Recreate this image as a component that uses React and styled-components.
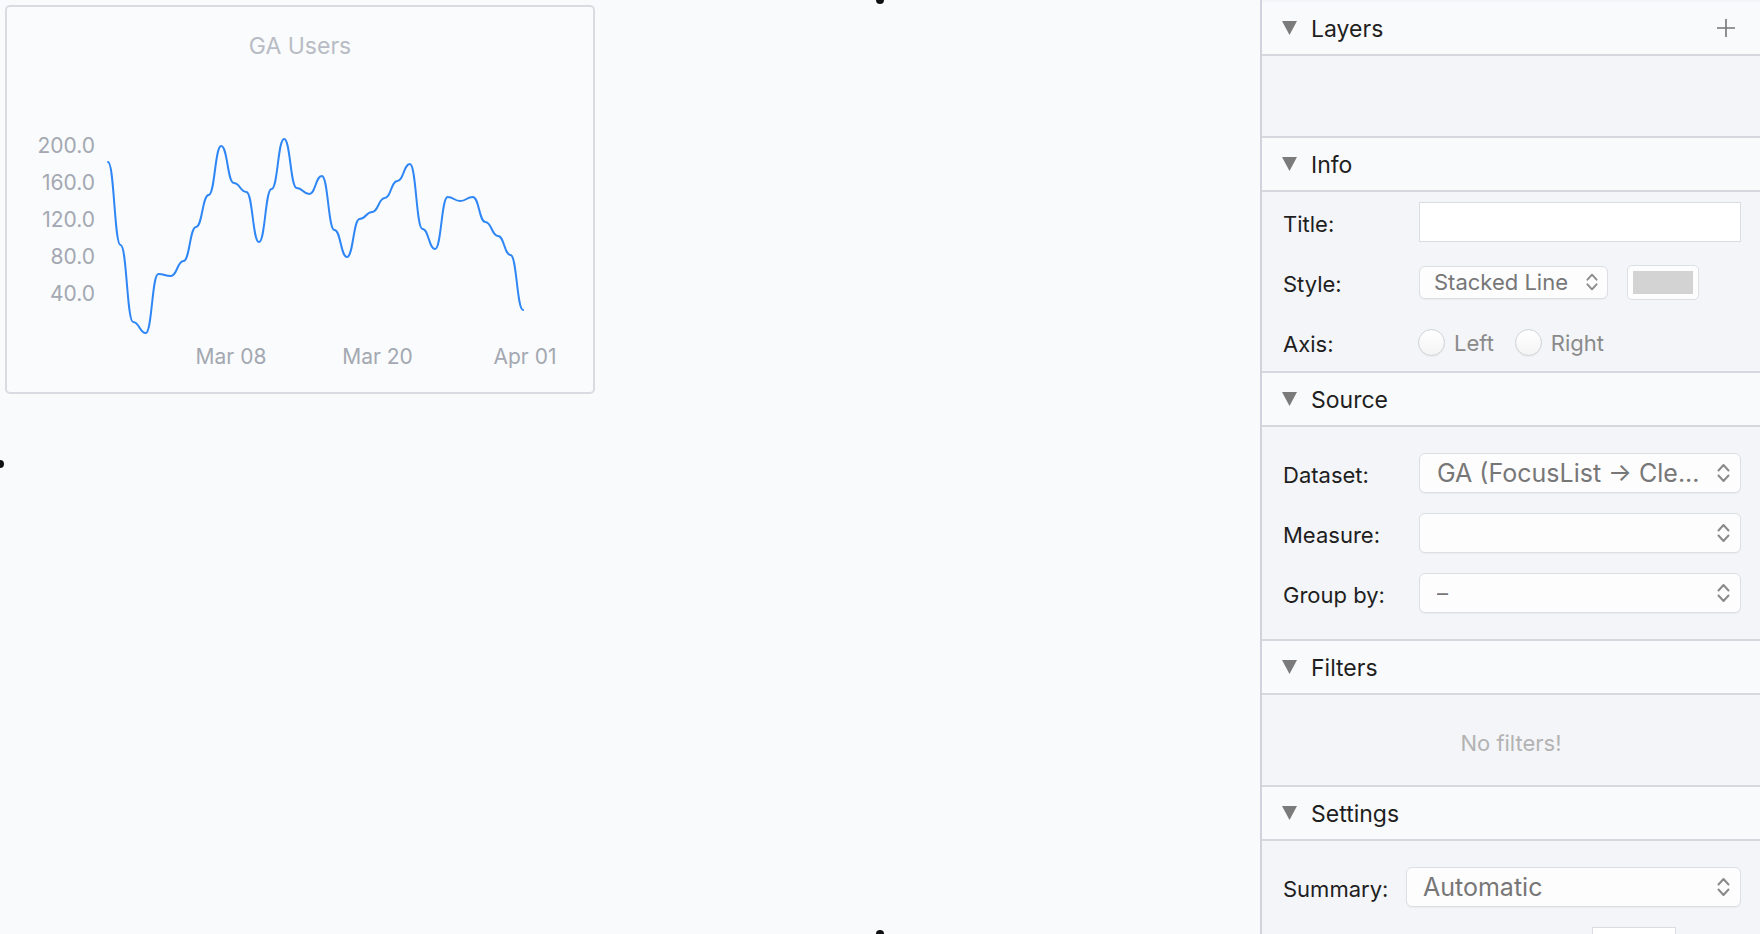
import React from "react";
import styled, { createGlobalStyle } from "styled-components";

const GlobalStyle = createGlobalStyle`
  html, body { margin: 0; padding: 0; }
  body {
    font-family: Inter, "Noto Sans", sans-serif;
    background: #f9fafc;
    -webkit-font-smoothing: antialiased;
  }
`;

const Shell = styled.div`
  display: flex;
  height: 934px;
  overflow: hidden;
  background: #f9fafc;
`;

const Canvas = styled.main`
  flex: 1;
  position: relative;
  padding: 5px;
`;

const Handle = styled.span`
  position: absolute;
  width: 8px;
  height: 8px;
  border-radius: 50%;
  background: #111;
  left: ${(p) => p.$x}px;
  top: ${(p) => p.$y}px;
`;

const ChartCard = styled.section`
  width: 590px;
  height: 389px;
  box-sizing: border-box;
  border: 2px solid #d8dbe2;
  border-radius: 5px;
  background: #fafbfc;
  display: flex;
  flex-direction: column;
  overflow: hidden;
`;

const ChartTitle = styled.h2`
  margin: 0;
  padding-top: 25px;
  height: 28px;
  line-height: 28px;
  font-size: 23px;
  font-weight: 400;
  color: #b8bcc4;
  text-align: center;
`;

const ChartSvg = styled.svg`
  display: block;
  overflow: visible;
`;

const AxisText = styled.text`
  font-family: Inter, "Noto Sans", sans-serif;
  font-size: 21px;
  fill: #a3a8b2;
`;

const Panel = styled.aside`
  width: 498px;
  flex: none;
  border-left: 2px solid #cfd3db;
  background: #f3f5f8;
  padding-top: 2px;
  display: flex;
  flex-direction: column;
`;

const SectionHeader = styled.header`
  height: 54px;
  box-sizing: border-box;
  flex: none;
  border-bottom: 2px solid #d5d8df;
  background: #f9fafb;
  display: flex;
  align-items: center;
  gap: 14px;
  padding: 0 25px 0 20px;
`;

const SectionTitle = styled.h3`
  margin: 0;
  flex: 1;
  font-size: 23px;
  font-weight: 400;
  color: #1f1f1f;
  padding-top: 2px;
`;

const SectionBody = styled.div`
  flex: none;
  box-sizing: border-box;
  height: ${(p) => p.$h + (p.$last ? 0 : 2)}px;
  padding: ${(p) => p.$pad || "0"};
  border-bottom: ${(p) => (p.$last ? "none" : "2px solid #d5d8df")};
  display: flex;
  flex-direction: column;
  gap: 20px;
  justify-content: ${(p) => (p.$center ? "center" : "flex-start")};
  align-items: ${(p) => (p.$center ? "center" : "stretch")};
`;

const Row = styled.div`
  display: grid;
  grid-template-columns: ${(p) => p.$labelW}px 1fr;
  align-items: center;
  height: 40px;
  flex: none;
`;

const Label = styled.label`
  font-size: 22px;
  color: #1e1e1e;
  padding-top: 3px;
`;

const TextInput = styled.div`
  height: 40px;
  box-sizing: border-box;
  border: 1px solid #d9dce2;
  background: #ffffff;
`;

const Controls = styled.div`
  display: flex;
  align-items: center;
`;

const Select = styled.div`
  display: flex;
  align-items: center;
  box-sizing: border-box;
  width: ${(p) => (p.$w ? `${p.$w}px` : "100%")};
  height: ${(p) => p.$h || 40}px;
  padding: 0 ${(p) => p.$pr || 9}px 0 ${(p) => p.$pl || 17}px;
  border: 1px solid #dcdfe4;
  border-radius: 6px;
  background: #fdfdfe;
  box-shadow: 0 1px 1px rgba(0, 0, 0, 0.04);
  font-size: ${(p) => p.$fs || 25}px;
  color: #777777;
`;

const SelectText = styled.span`
  flex: 1;
  white-space: nowrap;
  overflow: hidden;
`;

const Swatch = styled.div`
  width: 72px;
  height: 35px;
  box-sizing: border-box;
  padding: 5px;
  border: 1px solid #dcdfe4;
  border-radius: 5px;
  background: #fdfdfe;
  margin-left: 19px;
`;

const SwatchFill = styled.div`
  width: 100%;
  height: 100%;
  background: #d3d3d3;
`;

const Radio = styled.span`
  width: 27px;
  height: 27px;
  box-sizing: border-box;
  border-radius: 50%;
  border: 1px solid #cfd2d7;
  background: linear-gradient(#ffffff, #f4f4f5);
  box-shadow: 0 1px 1px rgba(0, 0, 0, 0.05);
  margin-left: ${(p) => p.$ml || 0}px;
  flex: none;
`;

const RadioText = styled.span`
  font-size: 22px;
  color: #8a8a8a;
  margin-left: 9px;
  padding-top: 2px;
`;

const EmptyNote = styled.span`
  font-size: 22px;
  color: #b3b3b3;
  padding-top: 6px;
`;

const SmallBox = styled.div`
  width: 84px;
  height: 40px;
  box-sizing: border-box;
  border: 1px solid #d9dce2;
  background: #ffffff;
  margin-left: 186px;
`;

const Chevrons = ({ w = 15, h = 24 }) => (
  <svg width={w} height={h} viewBox="0 0 15 24" fill="none">
    <path d="M2.5 9.5 L7.5 4 L12.5 9.5" stroke="#8a8a8a" strokeWidth="2" strokeLinecap="round" strokeLinejoin="round" />
    <path d="M2.5 14.5 L7.5 20 L12.5 14.5" stroke="#8a8a8a" strokeWidth="2" strokeLinecap="round" strokeLinejoin="round" />
  </svg>
);

const Disclosure = () => (
  <svg width="15" height="14" viewBox="0 0 15 14">
    <polygon points="0,0 15,0 7.5,14" fill="#7b7b7b" />
  </svg>
);

const Plus = () => (
  <svg width="18" height="18" viewBox="0 0 18 18">
    <path d="M9 0 V18 M0 9 H18" stroke="#767676" strokeWidth="1.6" />
  </svg>
);

const values = [162, 245, 322, 333, 274, 276, 261, 227, 195, 146, 183, 192, 242, 189, 139, 188, 194, 176, 230, 257, 219, 212, 198, 181, 164, 229, 249, 197, 201, 197, 222, 236, 255, 310];

function bumpPath(pts) {
  let d = `M${pts[0][0]},${pts[0][1]}`;
  for (let i = 1; i < pts.length; i++) {
    const [x0, y0] = pts[i - 1];
    const [x1, y1] = pts[i];
    const mx = (x0 + x1) / 2;
    d += ` C${mx},${y0} ${mx},${y1} ${x1},${y1}`;
  }
  return d;
}

const pts = values.map((y, i) => [108 + 12.58 * i, y]);
const linePath = bumpPath(pts);

const yTicks = [
  ["200.0", 145.5],
  ["160.0", 182.5],
  ["120.0", 219.5],
  ["80.0", 256.5],
  ["40.0", 293.5],
];
const xTicks = [
  ["Mar 08", 231],
  ["Mar 20", 377.5],
  ["Apr 01", 525],
];

function Chart() {
  return (
    <ChartCard>
      <ChartTitle>GA Users</ChartTitle>
      <ChartSvg width="586" height="330" viewBox="0 0 586 330">
        <g transform="translate(-7,-60)">
          {yTicks.map(([t, y]) => (
            <AxisText key={t} x="95" y={y} textAnchor="end" dominantBaseline="central">
              {t}
            </AxisText>
          ))}
          {xTicks.map(([t, x]) => (
            <AxisText key={t} x={x} y="356" textAnchor="middle" dominantBaseline="central">
              {t}
            </AxisText>
          ))}
          <path d={linePath} fill="none" stroke="#2f86f5" strokeWidth="2" strokeLinejoin="round" strokeLinecap="round" />
        </g>
      </ChartSvg>
    </ChartCard>
  );
}

function Header({ title, plus }) {
  return (
    <SectionHeader>
      <Disclosure />
      <SectionTitle>{title}</SectionTitle>
      {plus && <Plus />}
    </SectionHeader>
  );
}

export default function App() {
  return (
    <>
      <GlobalStyle />
      <Shell>
        <Canvas>
          <Chart />
          <Handle $x={876} $y={-4} />
          <Handle $x={-4} $y={460} />
          <Handle $x={876} $y={930} />
        </Canvas>
        <Panel>
          <Header title="Layers" plus />
          <SectionBody $h={80} />

          <Header title="Info" />
          <SectionBody $h={179} $pad="10px 19px 9px 21px">
            <Row $labelW={136}>
              <Label>Title:</Label>
              <TextInput />
            </Row>
            <Row $labelW={136}>
              <Label>Style:</Label>
              <Controls>
                <Select $w={189} $h={33} $pl={14} $pr={8} $fs={22}>
                  <SelectText>Stacked Line</SelectText>
                  <Chevrons w={14} h={22} />
                </Select>
                <Swatch>
                  <SwatchFill />
                </Swatch>
              </Controls>
            </Row>
            <Row $labelW={136}>
              <Label>Axis:</Label>
              <Controls>
                <Radio $ml={-1} />
                <RadioText>Left</RadioText>
                <Radio $ml={21} />
                <RadioText>Right</RadioText>
              </Controls>
            </Row>
          </SectionBody>

          <Header title="Source" />
          <SectionBody $h={212} $pad="26px 19px 26px 21px">
            <Row $labelW={136}>
              <Label>Dataset:</Label>
              <Select>
                <SelectText>GA (FocusList → Cle...</SelectText>
                <Chevrons />
              </Select>
            </Row>
            <Row $labelW={136}>
              <Label>Measure:</Label>
              <Select>
                <SelectText />
                <Chevrons />
              </Select>
            </Row>
            <Row $labelW={136}>
              <Label>Group by:</Label>
              <Select $fs={22}>
                <SelectText>–</SelectText>
                <Chevrons />
              </Select>
            </Row>
          </SectionBody>

          <Header title="Filters" />
          <SectionBody $h={90} $center>
            <EmptyNote>No filters!</EmptyNote>
          </SectionBody>

          <Header title="Settings" />
          <SectionBody $h={200} $pad="26px 19px 0 21px" $last>
            <Row $labelW={123}>
              <Label>Summary:</Label>
              <Select $pl={16} $fs={25}>
                <SelectText>Automatic</SelectText>
                <Chevrons />
              </Select>
            </Row>
            <Row $labelW={123}>
              <Label />
              <SmallBox />
            </Row>
          </SectionBody>
        </Panel>
      </Shell>
    </>
  );
}
